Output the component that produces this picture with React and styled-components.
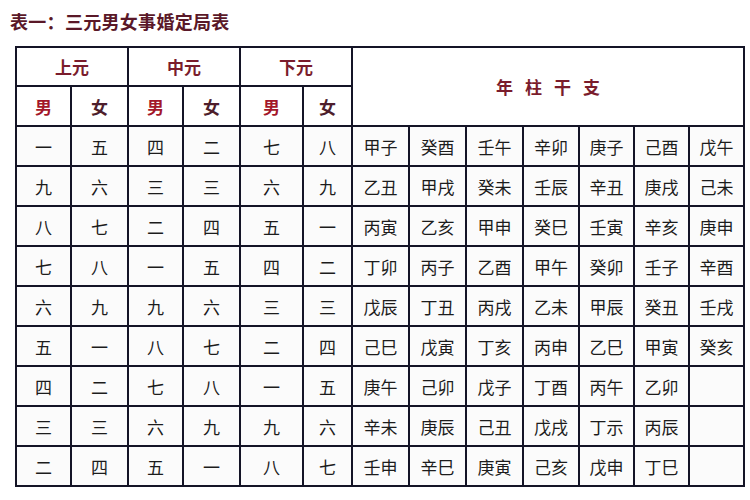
import React from "react";
import styled, { createGlobalStyle } from "styled-components";

const GlobalStyle = createGlobalStyle`
  html, body {
    margin: 0;
    padding: 0;
    background: #ffffff;
  }
  body {
    font-family: "Noto Sans CJK SC", "Noto Sans", sans-serif;
  }
`;

const Page = styled.div`
  width: 750px;
  height: 500px;
  padding: 9px 0 0 10px;
  box-sizing: border-box;
  overflow: hidden;
`;

const Title = styled.h1`
  margin: 0;
  height: 24px;
  font-family: "Noto Sans CJK SC", sans-serif;
  font-size: 18px;
  line-height: 24px;
  font-weight: 700;
  color: #5a1828;
  letter-spacing: 0.3px;
`;

const Table = styled.table`
  margin: 13px 0 0 5px;
  width: 728px;
  border-collapse: collapse;
  table-layout: fixed;
  background: #fbfbfb;
`;

const Row = styled.tr`
  height: ${(p) => p.h || 40}px;
`;

const Cell = styled.td`
  border: 2px solid #141426;
  padding: 0;
  text-align: center;
  vertical-align: middle;
  font-size: 17px;
  line-height: 1;
  color: #1c1c1c;
`;

const HeadCell = styled(Cell)`
  font-weight: 700;
  font-size: 17px;
  color: ${(p) => p.tone || "#7a1c2c"};
  letter-spacing: ${(p) => p.spread || 0}px;
  padding-left: ${(p) => p.spread || 0}px;
  background: #ffffff;
`;

const leftCols = [55, 57, 55, 57, 63, 49];
const rightCols = [57, 57, 57, 56, 55, 55, 55];

const rows = [
  ["一", "五", "四", "二", "七", "八", "甲子", "癸酉", "壬午", "辛卯", "庚子", "己酉", "戊午"],
  ["九", "六", "三", "三", "六", "九", "乙丑", "甲戌", "癸未", "壬辰", "辛丑", "庚戌", "己未"],
  ["八", "七", "二", "四", "五", "一", "丙寅", "乙亥", "甲申", "癸巳", "壬寅", "辛亥", "庚申"],
  ["七", "八", "一", "五", "四", "二", "丁卯", "丙子", "乙酉", "甲午", "癸卯", "壬子", "辛酉"],
  ["六", "九", "九", "六", "三", "三", "戊辰", "丁丑", "丙戌", "乙未", "甲辰", "癸丑", "壬戌"],
  ["五", "一", "八", "七", "二", "四", "己巳", "戊寅", "丁亥", "丙申", "乙巳", "甲寅", "癸亥"],
  ["四", "二", "七", "八", "一", "五", "庚午", "己卯", "戊子", "丁酉", "丙午", "乙卯", ""],
  ["三", "三", "六", "九", "九", "六", "辛未", "庚辰", "己丑", "戊戌", "丁示", "丙辰", ""],
  ["二", "四", "五", "一", "八", "七", "壬申", "辛巳", "庚寅", "己亥", "戊申", "丁巳", ""],
];

export default function App() {
  return (
    <Page>
      <GlobalStyle />
      <Title>表一：三元男女事婚定局表</Title>
      <Table>
        <colgroup>
          {[...leftCols, ...rightCols].map((w, i) => (
            <col key={i} style={{ width: w }} />
          ))}
        </colgroup>
        <tbody>
          <Row h={39}>
            <HeadCell colSpan={2}>上元</HeadCell>
            <HeadCell colSpan={2}>中元</HeadCell>
            <HeadCell colSpan={2}>下元</HeadCell>
            <HeadCell colSpan={7} rowSpan={2} spread={12}>
              年柱干支
            </HeadCell>
          </Row>
          <Row>
            {[0, 1, 2].map((k) => (
              <React.Fragment key={k}>
                <HeadCell tone="#a3172a">男</HeadCell>
                <HeadCell tone="#4e1e2c">女</HeadCell>
              </React.Fragment>
            ))}
          </Row>
          {rows.map((r, i) => (
            <Row key={i}>
              {r.map((t, j) => (
                <Cell key={j}>{t}</Cell>
              ))}
            </Row>
          ))}
        </tbody>
      </Table>
    </Page>
  );
}
